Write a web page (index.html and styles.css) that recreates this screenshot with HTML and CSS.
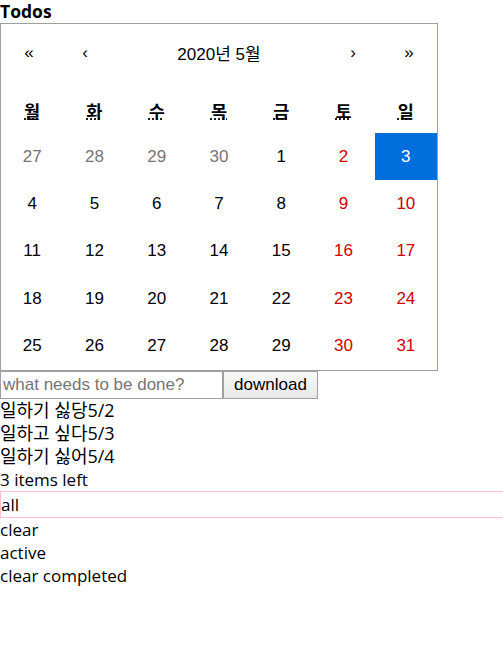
FILE: index.html
```html
<!DOCTYPE html>
<html lang="ko">

<head>
    <meta charset="UTF-8">
    <meta name="viewport" content="width=device-width, initial-scale=1.0">
    <title>Todos</title>
    <link rel="stylesheet" href="styles.css">
</head>

<body>
    <div class="title">Todos</div>

    <div class="calendar">
        <div class="calendar-nav">
            <button class="nav-btn">«</button>
            <button class="nav-btn">‹</button>
            <button class="nav-label">2020년 5월</button>
            <button class="nav-btn">›</button>
            <button class="nav-btn">»</button>
        </div>
        <div class="weekdays">
            <div class="weekday"><abbr title="월요일">월</abbr></div>
            <div class="weekday"><abbr title="화요일">화</abbr></div>
            <div class="weekday"><abbr title="수요일">수</abbr></div>
            <div class="weekday"><abbr title="목요일">목</abbr></div>
            <div class="weekday"><abbr title="금요일">금</abbr></div>
            <div class="weekday"><abbr title="토요일">토</abbr></div>
            <div class="weekday"><abbr title="일요일">일</abbr></div>
        </div>
        <div class="days">
            <button class="tile neighbor">27</button>
            <button class="tile neighbor">28</button>
            <button class="tile neighbor">29</button>
            <button class="tile neighbor">30</button>
            <button class="tile">1</button>
            <button class="tile weekend">2</button>
            <button class="tile active">3</button>

            <button class="tile">4</button>
            <button class="tile">5</button>
            <button class="tile">6</button>
            <button class="tile">7</button>
            <button class="tile">8</button>
            <button class="tile weekend">9</button>
            <button class="tile weekend">10</button>

            <button class="tile">11</button>
            <button class="tile">12</button>
            <button class="tile">13</button>
            <button class="tile">14</button>
            <button class="tile">15</button>
            <button class="tile weekend">16</button>
            <button class="tile weekend">17</button>

            <button class="tile">18</button>
            <button class="tile">19</button>
            <button class="tile">20</button>
            <button class="tile">21</button>
            <button class="tile">22</button>
            <button class="tile weekend">23</button>
            <button class="tile weekend">24</button>

            <button class="tile">25</button>
            <button class="tile">26</button>
            <button class="tile">27</button>
            <button class="tile">28</button>
            <button class="tile">29</button>
            <button class="tile weekend">30</button>
            <button class="tile weekend">31</button>
        </div>
    </div>

    <form class="todo-form">
        <input class="todo-input" type="text" placeholder="what needs to be done?">
        <button class="todo-submit" type="button">download</button>
    </form>

    <ul class="todo-list">
        <li>일하기 싫당5/2</li>
        <li>일하고 싶다5/3</li>
        <li>일하기 싫어5/4</li>
    </ul>

    <div class="count">3 items left</div>

    <ul class="filters">
        <li class="filter selected">all</li>
        <li class="filter">clear</li>
        <li class="filter">active</li>
        <li class="filter">clear completed</li>
    </ul>
</body>

</html>
```

FILE: styles.css
```css
body {
    margin: 0;
    font-family: "Open Sans", "Noto Sans CJK KR", sans-serif;
    font-size: 17px;
    color: #000;
    overflow: hidden;
}

.title {
    font-weight: bold;
    font-size: 17.5px;
    line-height: 23px;
}

.calendar {
    width: 436px;
    border: 1px solid #a0a096;
    font-family: "Liberation Sans", "Noto Sans CJK KR", sans-serif;
    font-size: 17px;
    background: white;
}

.calendar button {
    font-family: inherit;
    font-size: inherit;
    margin: 0;
    border: 0;
    padding: 0;
    background: none;
    color: #000;
}

.calendar-nav {
    display: flex;
    height: 57px;
}

.nav-btn {
    width: 56px;
}

.nav-label {
    flex-grow: 1;
}

.weekdays {
    display: grid;
    grid-template-columns: repeat(7, 1fr);
    height: 52px;
}

.weekday {
    text-align: center;
    font-weight: bold;
    font-size: 17.5px;
    padding-top: 21px;
    line-height: 20px;
}

.weekday abbr {
    text-decoration: underline dotted;
}

.days {
    display: grid;
    grid-template-columns: repeat(7, 1fr);
    grid-template-rows: repeat(5, 1fr);
    height: 237px;
}

.calendar .tile {
    line-height: 16px;
}

.calendar .neighbor {
    color: #757575;
}

.calendar .weekend {
    color: #d10000;
}

.calendar .active {
    background: #006edc;
    color: white;
}

.todo-form {
    display: flex;
    margin: 0;
}

.todo-input {
    width: 223px;
    height: 28px;
    box-sizing: border-box;
    margin: 0;
    padding: 1px 2px;
    border: 1px solid #a0a0a0;
    font-family: "Liberation Sans", sans-serif;
    font-size: 17px;
}

.todo-input::placeholder {
    color: #757575;
}

.todo-submit {
    height: 28px;
    width: 95px;
    margin: 0;
    padding: 0 6px;
    border: 1px solid #a0a0a0;
    background: linear-gradient(#f8f8f8, #e8e8e8);
    font-family: "Liberation Sans", sans-serif;
    font-size: 17px;
    color: #000;
}

.todo-list,
.filters {
    list-style: none;
    margin: 0;
    padding: 0;
}

.todo-list li {
    font-size: 18px;
}

.todo-list li,
.count,
.filter {
    line-height: 23px;
}

.filter.selected {
    border: 1px solid pink;
    margin-right: -2px;
    line-height: 25px;
}
```
